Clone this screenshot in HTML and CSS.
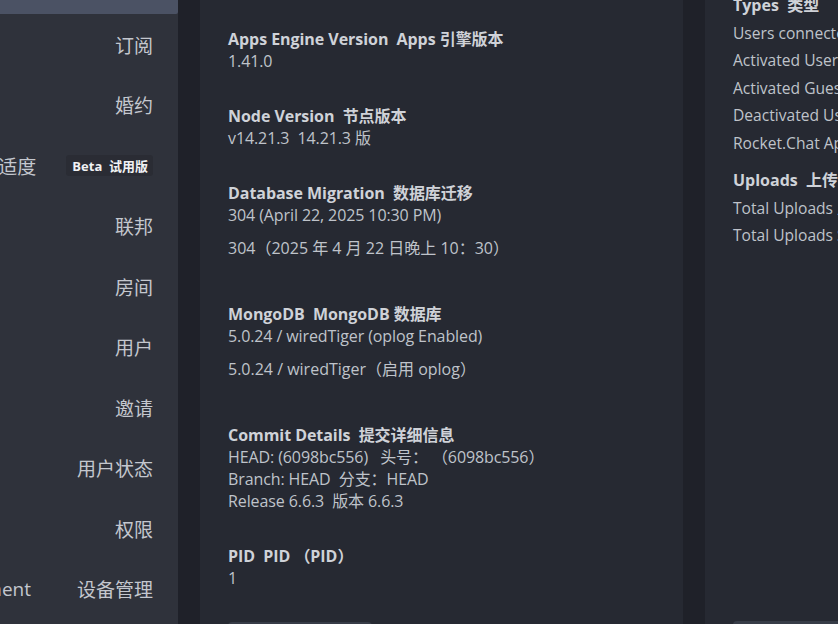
FILE: index.html
```html
<!DOCTYPE html>
<html lang="zh">
<head>
<meta charset="utf-8">
<link rel="stylesheet" href="styles.css">
</head>
<body>
<div class="page">
  <aside class="sidebar">
    <div class="sidebar-top"></div>
    <div class="nav-row">订阅</div>
    <div class="nav-row">婚约</div>
    <div class="nav-row"><span class="clip-left">Moderation 适度</span><span class="badge">Beta&nbsp; 试用版</span></div>
    <div class="nav-row">联邦</div>
    <div class="nav-row">房间</div>
    <div class="nav-row">用户</div>
    <div class="nav-row">邀请</div>
    <div class="nav-row">用户状态</div>
    <div class="nav-row">权限</div>
    <div class="nav-row"><span class="clip-left wide">Device Management</span><span>设备管理</span></div>
  </aside>
  <div class="gutter"></div>
  <main class="panel main-panel">
    <section class="info">
      <h4 class="info-title">Apps Engine Version&nbsp; Apps 引擎版本</h4>
      <div class="info-value">1.41.0</div>
    </section>
    <section class="info">
      <h4 class="info-title">Node Version&nbsp; 节点版本</h4>
      <div class="info-value">v14.21.3&nbsp; 14.21.3 版</div>
    </section>
    <section class="info">
      <h4 class="info-title">Database Migration&nbsp; 数据库迁移</h4>
      <div class="info-value">304 (April 22, 2025 10:30 PM)</div>
      <p class="info-tr">304（2025 年 4 月 22 日晚上 10：30）</p>
    </section>
    <section class="info">
      <h4 class="info-title">MongoDB&nbsp; MongoDB 数据库</h4>
      <div class="info-value">5.0.24 / wiredTiger (oplog Enabled)</div>
      <p class="info-tr">5.0.24 / wiredTiger（启用 oplog）</p>
    </section>
    <section class="info">
      <h4 class="info-title">Commit Details&nbsp; 提交详细信息</h4>
      <div class="info-value">HEAD: (6098bc556)&nbsp;&nbsp; 头号：&nbsp;（6098bc556）</div>
      <div class="info-value">Branch: HEAD&nbsp; 分支：HEAD</div>
      <div class="info-value">Release 6.6.3&nbsp; 版本 6.6.3</div>
    </section>
    <section class="info">
      <h4 class="info-title">PID&nbsp; PID （PID）</h4>
      <div class="info-value">1</div>
    </section>
    <div class="btn-stub"></div>
  </main>
  <div class="gutter"></div>
  <div class="panel side-panel">
    <h4 class="stat-title first">Types&nbsp; 类型</h4>
    <div class="stat-row">Users connected 用户已连接</div>
    <div class="stat-row">Activated Users 激活用户</div>
    <div class="stat-row">Activated Guests 激活访客</div>
    <div class="stat-row">Deactivated Users 停用用户</div>
    <div class="stat-row last">Rocket.Chat Apps 应用</div>
    <h4 class="stat-title">Uploads&nbsp; 上传</h4>
    <div class="stat-row">Total Uploads 上传总数</div>
    <div class="stat-row">Total Uploads Size 上传总大小</div>
    <div class="spacer"></div>
    <div class="btn-stub"></div>
  </div>
</div>
</body>
</html>
```

FILE: styles.css
```css
* { box-sizing: border-box; }
html, body {
  margin: 0;
  padding: 0;
  width: 838px;
  height: 624px;
  overflow: hidden;
  background: #1f2129;
}
body {
  font-family: "Open Sans", "Noto Sans CJK SC", sans-serif;
  color: #c5c8cf;
}
.page {
  display: flex;
  height: 624px;
  width: 838px;
  overflow: hidden;
}
.sidebar {
  width: 178px;
  flex: none;
  background: #2f323b;
  overflow: hidden;
  display: flex;
  flex-direction: column;
}
.sidebar-top {
  height: 14px;
  flex: none;
  background: #4b5264;
  border-bottom-right-radius: 2px;
  margin-bottom: 0.5px;
}
.nav-row {
  height: 60.5px;
  flex: none;
  display: flex;
  justify-content: flex-end;
  align-items: center;
  padding-right: 25px;
  font-size: 19px;
  color: #c4c7ce;
  white-space: nowrap;
}
.clip-left { margin-right: 30px; }
.clip-left.wide { margin-right: 46px; }
.badge {
  background: #2a2c34;
  border-radius: 3px;
  color: #f1f2f4;
  font-weight: 700;
  font-size: 13px;
  padding: 2px 5px 2px 6px;
  height: 21px;
  display: inline-flex;
  align-items: center;
}
.gutter {
  width: 22px;
  flex: none;
  background: #1f2129;
}
.panel {
  background: #262932;
  flex: none;
  display: flex;
  flex-direction: column;
  overflow: hidden;
}
.main-panel {
  width: 483px;
  padding: 28px 28px 0;
}
.side-panel {
  width: 133px;
  padding: 0 0 0 28px;
  white-space: nowrap;
}
.info { margin-bottom: 33px; }
.info-title {
  margin: 0;
  font-size: 16px;
  line-height: 22px;
  font-weight: 700;
  color: #cfd2d8;
  letter-spacing: -0.05px;
}
.info-value {
  font-size: 16px;
  line-height: 22px;
  color: #bfc3ca;
  letter-spacing: -0.1px;
}
.info-tr {
  margin: 10.5px 0 11.5px;
  font-size: 16px;
  line-height: 22px;
  color: #bfc3ca;
  letter-spacing: 0;
}
.btn-stub {
  flex: none;
  width: 144px;
  height: 4px;
  margin-bottom: -1px;
  background: #373c47;
  border-radius: 4px 4px 0 0;
}
.stat-title {
  margin: 0;
  font-size: 16px;
  line-height: 27.5px;
  font-weight: 700;
  color: #cfd2d8;
}
.stat-title.first { margin-top: -8px; }
.stat-row {
  font-size: 15.6px;
  line-height: 27.5px;
  color: #bfc3ca;
}
.stat-row.last { margin-bottom: 10px; }
.spacer { flex: 1; }
.side-panel .btn-stub { width: 120px; }
```
